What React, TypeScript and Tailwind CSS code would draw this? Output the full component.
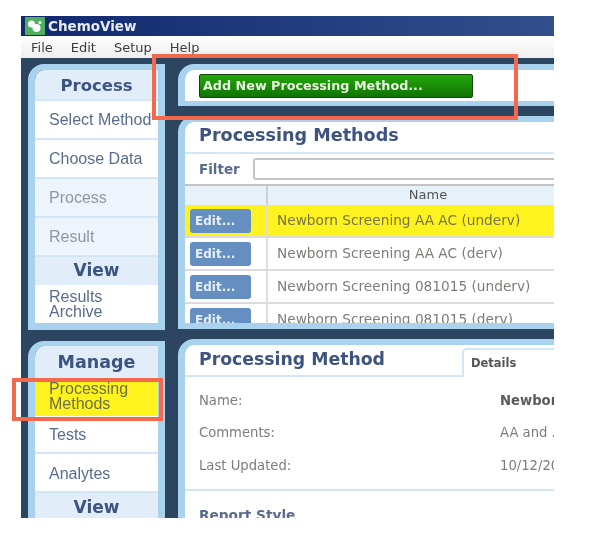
import type { ReactNode } from "react";

const navFont = "font-['Liberation_Sans',sans-serif]";
const wideFont = "font-['DejaVu_Sans',sans-serif]";

const NAV_TONES = {
  plain: "bg-white text-[#5a6c8c]",
  muted: "bg-[#eef4fb] text-[#8f969f]",
  selected: "bg-[#fff31f] text-[#6a7045]",
};

function NavItem({
  children,
  tone = "plain",
  className = "h-[39px] border-b-2",
}: {
  children: ReactNode;
  tone?: keyof typeof NAV_TONES;
  className?: string;
}) {
  return (
    <div
      className={`flex shrink-0 items-center whitespace-nowrap border-[#d3e6f6] pl-[14px] text-[16px] leading-[15px] ${navFont} ${NAV_TONES[tone]} ${className}`}
    >
      <span>{children}</span>
    </div>
  );
}

function NavHeading({ children, className }: { children: ReactNode; className?: string }) {
  return (
    <div
      className={`flex shrink-0 items-center justify-center bg-[#e1edf9] font-bold text-[#3d5380] ${wideFont} ${className ?? ""}`}
    >
      {children}
    </div>
  );
}

function MethodRow({ name, active }: { name: string; active?: boolean }) {
  return (
    <div className={`flex h-[33px] shrink-0 border-b-2 border-[#dcdcdc] ${active ? "bg-[#fff31f]" : "bg-white"}`}>
      <div className="flex w-[83px] shrink-0 items-center border-r-2 border-[#dcdcdc]">
        <button
          className={`ml-[5px] flex h-[24px] w-[61px] shrink-0 items-center rounded-[3px] bg-[#648fc0] pl-[5px] text-[12px] font-bold text-[#e8eef6] ${wideFont}`}
        >
          Edit...
        </button>
      </div>
      <div
        className={`flex items-center whitespace-nowrap pl-[9px] text-[13.7px] ${wideFont} ${
          active ? "text-[#77744a]" : "text-[#7d7d78]"
        }`}
      >
        {name}
      </div>
    </div>
  );
}

function DetailRow({ label, value, bold }: { label: string; value: string; bold?: boolean }) {
  return (
    <div className={`flex h-[32.5px] items-center whitespace-nowrap text-[13.2px] text-[#7d7d7d] ${wideFont}`}>
      <div className="w-[301px] shrink-0">{label}</div>
      <div className={bold ? "font-bold text-[#5b5b5b]" : ""}>{value}</div>
    </div>
  );
}

export default function App() {
  return (
    <div className="relative h-[547px] w-[605px] overflow-hidden bg-white">
      <div className="ml-[21px] w-[533px] pt-[16px] blur-[0.7px]">
        {/* title bar */}
        <div className="flex h-[20px] items-center bg-gradient-to-r from-[#12286f] to-[#324f8b]">
          <div className="ml-[4px] flex h-[18px] w-[20px] items-center justify-center bg-[#4cb060]">
            <svg width="16" height="13" viewBox="0 0 16 13">
              <circle cx="4.5" cy="4" r="3.5" fill="#fff" />
              <circle cx="9.5" cy="8" r="4" fill="#fff" />
              <circle cx="13" cy="2.5" r="1.5" fill="#fff" />
            </svg>
          </div>
          <span className={`ml-[3px] text-[13.5px] font-bold text-[#e6ebf5] ${wideFont}`}>ChemoView</span>
        </div>

        {/* menu bar */}
        <div
          className={`flex h-[22px] items-center gap-[18px] bg-gradient-to-b from-white to-[#eeeeee] pl-[10px] pt-[1px] text-[13px] text-[#3c3c3c] ${wideFont}`}
        >
          <span>File</span>
          <span>Edit</span>
          <span>Setup</span>
          <span>Help</span>
        </div>

        {/* workspace */}
        <div className="flex h-[460px] gap-[13px] overflow-hidden bg-[#2c4560] pl-[7px] pt-[6px]">
          {/* left column */}
          <div className="flex w-[137px] shrink-0 flex-col gap-[11px]">
            <div className="flex h-[266px] shrink-0 flex-col overflow-hidden rounded-tl-[16px] border-x-[7px] border-t-[6px] border-b-[7px] border-[#a9d2ef]">
              <NavHeading className="h-[31px] border-b-2 border-[#d3e6f6] pt-[3px] text-[16.5px]">Process</NavHeading>
              <NavItem>Select Method</NavItem>
              <NavItem>Choose Data</NavItem>
              <NavItem tone="muted">Process</NavItem>
              <NavItem tone="muted">Result</NavItem>
              <NavHeading className="h-[28px] text-[17px]">View</NavHeading>
              <NavItem className="h-[38px]">
                Results
                <br />
                Archive
              </NavItem>
            </div>
            <div className="flex flex-1 flex-col overflow-hidden rounded-tl-[16px] border-x-[7px] border-t-[5px] border-[#a9d2ef]">
              <NavHeading className="h-[35px] pb-[2px] text-[17.5px]">Manage</NavHeading>
              <NavItem tone="selected" className="h-[35px] pb-[5px]">
                Processing
                <br />
                Methods
              </NavItem>
              <NavItem className="h-[38px] border-b-2">Tests</NavItem>
              <NavItem className="h-[39px] border-b-2 pt-[2px]">Analytes</NavItem>
              <NavHeading className="h-[28px] pt-[1px] text-[17px]">View</NavHeading>
            </div>
          </div>

          {/* right column */}
          <div className="flex min-w-0 flex-1 flex-col">
            <div className="flex h-[42px] shrink-0 items-center overflow-hidden rounded-tl-[16px] border-t-[6px] border-b-[5px] border-l-[7px] border-[#a9d2ef] bg-white pl-[14px]">
              <button
                className={`flex h-[24px] w-[274px] items-center rounded-[2px] border border-[#14430a] bg-gradient-to-b from-[#25a80c] to-[#107304] pl-[3px] text-[12.75px] font-bold text-[#e8f4e0] ${wideFont}`}
              >
                Add New Processing Method...
              </button>
            </div>

            <div className="mt-[10px] flex h-[213px] shrink-0 flex-col overflow-hidden rounded-tl-[16px] border-y-[6px] border-l-[7px] border-[#a9d2ef] bg-white">
              <div className={`flex h-[32px] shrink-0 items-center border-b-2 border-[#d3e6f6] pb-[3px] pl-[14px] text-[17.6px] font-bold text-[#3d5380] ${wideFont}`}>
                Processing Methods
              </div>
              <div className="flex h-[32px] shrink-0 items-center border-b-2 border-[#c4c4c4] pl-[14px]">
                <span className={`text-[13.5px] font-bold text-[#5a6c8c] ${wideFont}`}>Filter</span>
                <div className="ml-[13px] h-[22px] flex-1 rounded-l-[3px] border-2 border-r-0 border-[#c4c4c4] bg-white" />
              </div>
              <div className="flex h-[19px] shrink-0 bg-[#e6f1f9]">
                <div className="w-[83px] shrink-0 border-r-2 border-[#d0d0d0]" />
                <div className={`w-[320px] shrink-0 text-center text-[13px] leading-[18px] text-[#555] ${wideFont}`}>Name</div>
              </div>
              <div className="min-h-0 flex-1 overflow-hidden">
                <MethodRow active name="Newborn Screening AA AC (underv)" />
                <MethodRow name="Newborn Screening AA AC (derv)" />
                <MethodRow name="Newborn Screening 081015 (underv)" />
                <MethodRow name="Newborn Screening 081015 (derv)" />
              </div>
            </div>

            <div className="mt-[10px] flex flex-1 flex-col overflow-hidden rounded-tl-[16px] border-t-[6px] border-l-[7px] border-[#a9d2ef] bg-white">
              <div className="flex h-[32px] shrink-0">
                <div className={`flex w-[277px] shrink-0 items-center border-b-2 border-[#d3e6f6] pl-[14px] text-[17.3px] font-bold text-[#3d5380] ${wideFont}`}>
                  Processing Method
                </div>
                <div className={`mt-[3px] flex flex-1 items-center rounded-tl-[5px] border-t-2 border-l-2 border-[#d3e6f6] pl-[7px] text-[11.5px] font-bold text-[#555] ${wideFont}`}>
                  Details
                </div>
              </div>
              <div className="flex h-[114px] shrink-0 flex-col justify-center border-b-2 border-[#d3e6f6] pl-[14px]">
                <DetailRow bold label="Name:" value="Newborn" />
                <DetailRow label="Comments:" value="AA and ." />
                <DetailRow label="Last Updated:" value="10/12/20" />
              </div>
              <div className={`pl-[14px] pt-[14px] text-[13.7px] font-bold text-[#5a6c8c] ${wideFont}`}>Report Style</div>
            </div>
          </div>
        </div>
      </div>

      {/* red annotation boxes */}
      <div className="absolute left-[152px] top-[54px] h-[66px] w-[366px] border-[4px] border-[#f2694e]" />
      <div className="absolute left-[12px] top-[378px] h-[43px] w-[151px] border-[4px] border-[#f2694e]" />
    </div>
  );
}
